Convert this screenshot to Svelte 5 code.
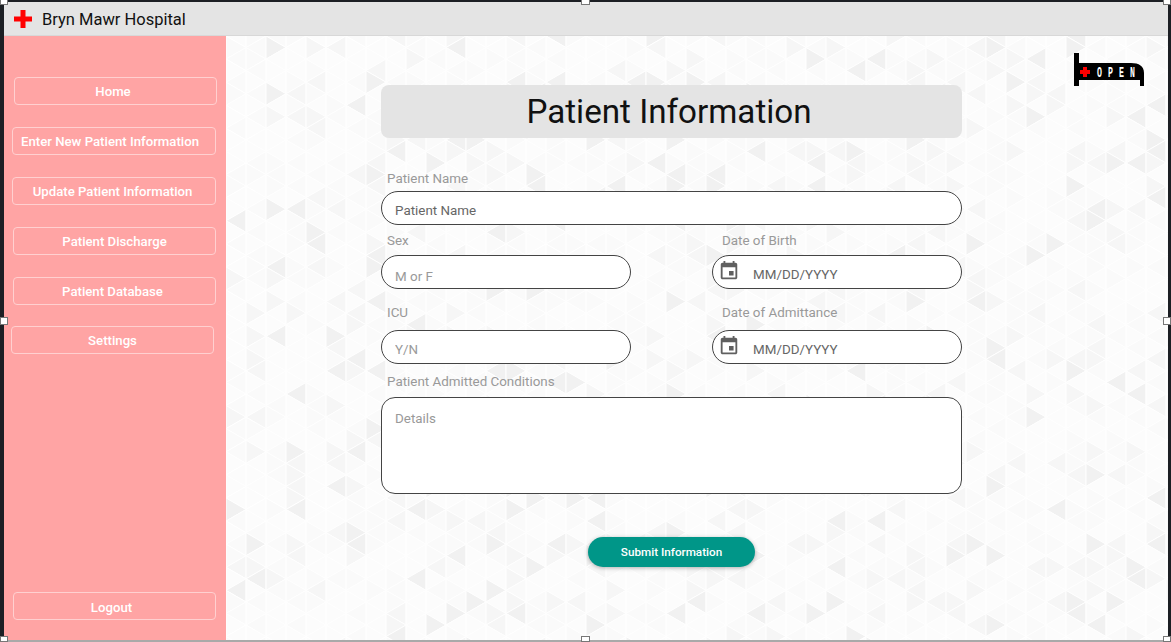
<script>
	const nav = [
		{ label: 'Home', cls: 'home' },
		{ label: 'Enter New Patient Information', cls: 'enter' },
		{ label: 'Update Patient Information', cls: 'update' },
		{ label: 'Patient Discharge', cls: 'discharge' },
		{ label: 'Patient Database', cls: 'database' },
		{ label: 'Settings', cls: 'settings' }
	]

	// triangle tiling for the page background
	const cw = 20
	const eh = 23.1
	let seed = 7
	const rnd = () => {
		seed = (seed * 16807) % 2147483647
		return seed / 2147483647
	}
	const shade = () => {
		const r = rnd()
		if (r < 0.07) return '#f1f1f1'
		if (r < 0.2) return '#f6f6f6'
		if (r < 0.55) return '#fafafa'
		return '#fcfcfc'
	}
	const tris = []
	for (let c = 0; c < 48; c++) {
		const x = c * cw
		const off = c % 2 ? eh / 2 : 0
		for (let r = -1; r < 28; r++) {
			const y = r * eh + off
			// right-pointing, then left-pointing triangle
			tris.push({ p: `${x},${y} ${x},${y + eh} ${x + cw},${y + eh / 2}`, f: shade() })
			tris.push({ p: `${x},${y + eh} ${x + cw},${y + eh / 2} ${x + cw},${y + eh * 1.5}`, f: shade() })
		}
	}

	const handles = ['tl', 'tc', 'tr', 'ml', 'mr', 'bl', 'bc', 'br']
</script>

{#snippet calendar()}
	<svg class="cal" viewBox="0 0 24 24" width="22" height="22" aria-hidden="true">
		<path
			fill="#5f5f5f"
			d="M17 12h-5v5h5v-5zM16 1v2H8V1H6v2H5c-1.11 0-1.99.9-1.99 2L3 19c0 1.1.89 2 2 2h14c1.1 0 2-.9 2-2V5c0-1.1-.9-2-2-2h-1V1h-2zm3 18H5V8h14v11z"
		/>
	</svg>
{/snippet}

<div class="frame">
	<header class="top">
		<svg class="cross" viewBox="0 0 18 18" width="18" height="18" aria-hidden="true">
			<path fill="#ff0000" d="M6.5 0h5v6.500h6.500v5h-6.500v6.500h-5v-6.500h-6.500v-5h6.500z" />
		</svg>
		<span class="brand">Bryn Mawr Hospital</span>
	</header>

	<div class="body">
		<aside class="side">
			<nav class="links">
				{#each nav as item}
					<button type="button" class="link {item.cls}">{item.label}</button>
				{/each}
			</nav>
			<button type="button" class="link logout">Logout</button>
		</aside>

		<main class="main">
			<svg class="tiles" width="960" height="606" aria-hidden="true">
				{#each tris as t}
					<polygon points={t.p} fill={t.f} stroke="#ffffff" stroke-width="1" />
				{/each}
			</svg>

			<svg class="open" viewBox="0 0 70 33" width="70" height="33" aria-label="Open">
				<path fill="#000" d="M0 0h5v10h52c8 0 13 3 13 10v13h-4v-6H5v6H0z" />
				<path fill="#ff0000" d="M9 14h4v3h3v4h-3v3H9v-3H6v-4h3z" />
				<text class="open-text" transform="translate(23 24) scale(0.55 1)">OPEN</text>
			</svg>

			<form class="form" on:submit|preventDefault>
				<h1 class="title">Patient Information</h1>

				<label class="field name">
					<span>Patient Name</span>
					<input type="text" class="dark" placeholder="Patient Name" />
				</label>

				<div class="pair first">
					<label class="field">
						<span>Sex</span>
						<input type="text" class="sex" placeholder="M or F" />
					</label>
					<label class="field">
						<span>Date of Birth</span>
						<div class="date">
							{@render calendar()}
							<input type="text" class="dark" placeholder="MM/DD/YYYY" />
						</div>
					</label>
				</div>

				<div class="pair second">
					<label class="field">
						<span>ICU</span>
						<input type="text" placeholder="Y/N" />
					</label>
					<label class="field">
						<span>Date of Admittance</span>
						<div class="date">
							{@render calendar()}
							<input type="text" class="dark" placeholder="MM/DD/YYYY" />
						</div>
					</label>
				</div>

				<label class="field conditions">
					<span>Patient Admitted Conditions</span>
					<textarea placeholder="Details"></textarea>
				</label>

				<button type="submit" class="submit">Submit Information</button>
			</form>
		</main>
	</div>

	{#each handles as h}
		<i class="handle {h}"></i>
	{/each}
</div>

<style>
	:global(body) {
		background: #fff;
		overflow: hidden;
	}
	.frame {
		position: relative;
		box-sizing: border-box;
		width: 1171px;
		height: 642px;
		display: flex;
		flex-direction: column;
		border-top: 2px solid #1c1f24;
		border-left: 4px solid #1c1f24;
		border-right: 3px solid #1c1f24;
		border-bottom: 2px solid #a9a9a9;
		font-family: Roboto, 'Liberation Sans', sans-serif;
	}
	.top {
		flex: none;
		height: 33px;
		display: flex;
		align-items: center;
		gap: 10px;
		padding-left: 10px;
		background: #e4e4e4;
		border-bottom: 1px solid #d8d8d8;
	}
	.cross {
		display: block;
	}
	.brand {
		font-size: 16.5px;
		color: #111;
		padding-top: 1px;
	}
	.body {
		flex: 1;
		display: flex;
		min-height: 0;
	}
	.side {
		flex: none;
		width: 222px;
		background: #ffa4a4;
		display: flex;
		flex-direction: column;
		justify-content: space-between;
		padding: 41px 0 20px;
		box-sizing: border-box;
	}
	.links {
		display: flex;
		flex-direction: column;
		gap: 22px;
	}
	.link {
		display: block;
		box-sizing: border-box;
		height: 28px;
		padding: 0;
		background: transparent;
		border: 1px solid #ffd0d0;
		border-radius: 4px;
		color: #fff;
		font: 500 13.2px Roboto, 'Liberation Sans', sans-serif;
		text-align: center;
	}
	.home {
		width: 203px;
		margin-left: 10px;
		padding-right: 5px;
	}
	.enter {
		width: 204px;
		margin-left: 8px;
		padding-right: 8px;
	}
	.update {
		width: 204px;
		margin-left: 8px;
		padding-right: 3px;
	}
	.discharge,
	.database {
		width: 203px;
		margin-left: 9px;
	}
	.database {
		padding-right: 4px;
	}
	.settings {
		width: 203px;
		margin-left: 7px;
		margin-top: -1px;
	}
	.logout {
		width: 203px;
		margin-left: 9px;
		padding: 2px 6px 0 0;
	}
	.main {
		position: relative;
		flex: 1;
		min-width: 0;
		overflow: hidden;
		background: #fbfbfb;
	}
	.tiles {
		position: absolute;
		left: 0;
		top: 0;
	}
	.open {
		position: absolute;
		left: 848px;
		top: 17px;
	}
	.open-text {
		font: 700 15px 'Liberation Mono', monospace;
		letter-spacing: 11px;
		fill: #fff;
	}
	.form {
		position: relative;
		width: 581px;
		margin-left: 155px;
		padding-top: 49px;
		display: flex;
		flex-direction: column;
	}
	.title {
		margin: 0 0 32px;
		height: 53px;
		line-height: 53px;
		padding-right: 5px;
		box-sizing: border-box;
		background: #e4e4e4;
		border-radius: 8px;
		text-align: center;
		font-size: 33.2px;
		font-weight: 400;
		color: #111;
	}
	.field {
		display: block;
	}
	.field span {
		display: block;
		height: 21px;
		padding-left: 6px;
		font-size: 13.4px;
		line-height: 16px;
		color: #999;
	}
	.name span {
		line-height: 18px;
	}
	input,
	textarea {
		display: block;
		box-sizing: border-box;
		width: 100%;
		background: #fff;
		border: 1px solid #444;
		font: 13.4px Roboto, 'Liberation Sans', sans-serif;
		color: #555;
		outline: none;
	}
	input {
		height: 34px;
		border-radius: 17px;
		padding: 4px 13px 0;
	}
	input.sex {
		padding-top: 8px;
	}
	input::placeholder,
	textarea::placeholder {
		color: #999;
		opacity: 1;
	}
	input.dark::placeholder {
		color: #666;
	}
	.pair {
		display: grid;
		grid-template-columns: 250px 250px;
		justify-content: space-between;
	}
	.first {
		margin-top: 8px;
	}
	.first .field span {
		height: 22px;
	}
	.second {
		margin-top: 16px;
	}
	.second .field span {
		height: 25px;
	}
	.pair .field:last-child span {
		padding-left: 10px;
	}
	.date {
		position: relative;
	}
	.date input {
		padding-left: 40px;
	}
	.cal {
		position: absolute;
		left: 6px;
		top: 5px;
	}
	.conditions {
		margin-top: 10px;
	}
	.conditions span {
		height: 23px;
	}
	textarea {
		height: 97px;
		border-radius: 14px;
		padding: 13px 13px;
		resize: none;
	}
	.submit {
		align-self: center;
		margin-top: 43px;
		width: 167px;
		height: 30px;
		border: none;
		border-radius: 15px;
		background: #009688;
		color: #fff;
		font: 500 11.7px Roboto, 'Liberation Sans', sans-serif;
		box-shadow: 0 1px 4px rgba(0, 0, 0, 0.3);
	}
	.handle {
		position: absolute;
		width: 8px;
		height: 8px;
		box-sizing: border-box;
		background: #fff;
		border: 1px solid #777;
	}
	.tl { left: -4px; top: -5px; }
	.tc { left: 577px; top: -5px; width: 9px; }
	.tr { right: -3px; top: -5px; }
	.ml { left: -4px; top: 315px; }
	.mr { right: -3px; top: 315px; }
	.bl { left: -4px; bottom: -2px; height: 6px; }
	.bc { left: 577px; bottom: -2px; width: 9px; height: 6px; }
	.br { right: -3px; bottom: -2px; height: 6px; }
</style>
